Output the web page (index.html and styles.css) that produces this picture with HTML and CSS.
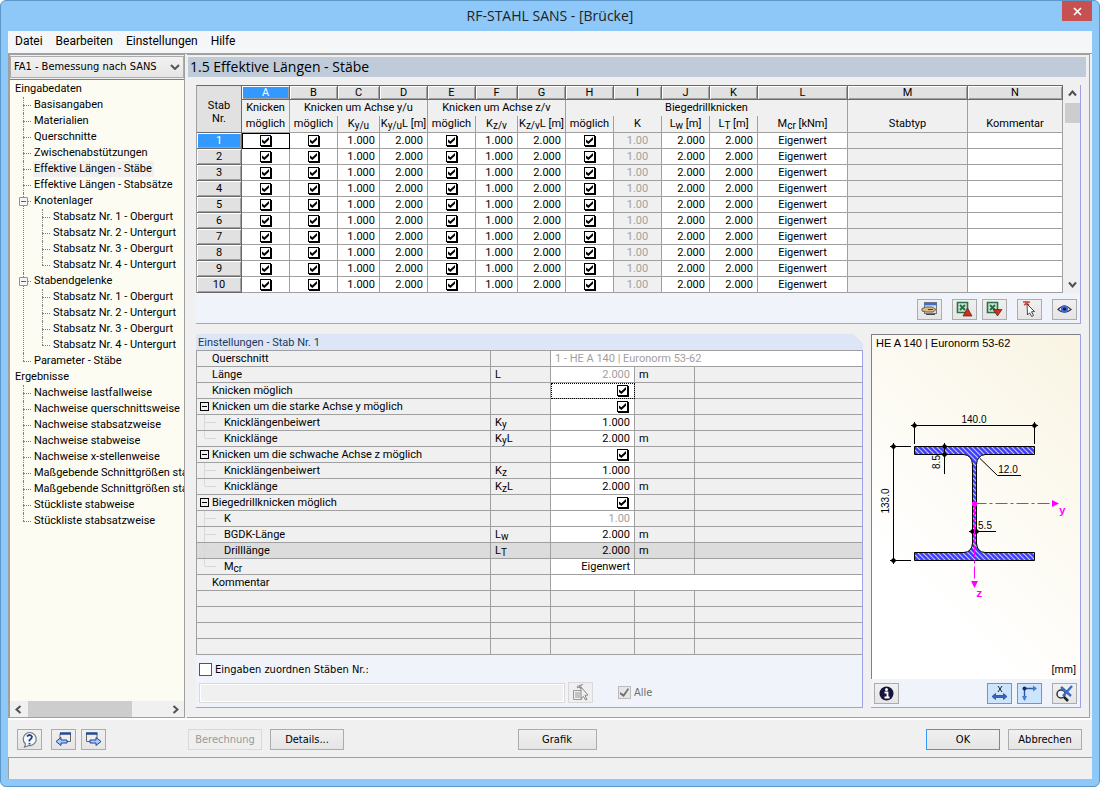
FILE: index.html
```html
<!DOCTYPE html>
<html lang="de">
<head>
<meta charset="utf-8">
<title>RF-STAHL SANS - [Brücke]</title>
<link rel="stylesheet" href="styles.css">
</head>
<body>
<div class="window">
  <header class="titlebar">
    <h1>RF-STAHL SANS - [Brücke]</h1>
    <button class="close" aria-label="Schließen"><svg width="9" height="9" viewBox="0 0 9 9"><path d="M1 1l7 7M8 1L1 8" stroke="#fff" stroke-width="1.7"/></svg></button>
  </header>
  <div class="client">
    <nav class="menubar">
      <a href="#">Datei</a><a href="#">Bearbeiten</a><a href="#">Einstellungen</a><a href="#">Hilfe</a>
    </nav>
    <div class="workspace">
      <aside class="sidebar">
        <div class="case"><select aria-label="Bemessungsfall"><option>FA1 - Bemessung nach SANS</option></select>
          <svg width="10" height="6" viewBox="0 0 10 6"><path d="M1 1l4 4 4-4" fill="none" stroke="#555" stroke-width="2"/></svg></div>
        <div class="tree">
          <ul class="root">
            <li><a href="#">Eingabedaten</a>
              <ul>
                <li><a href="#">Basisangaben</a></li>
                <li><a href="#">Materialien</a></li>
                <li><a href="#">Querschnitte</a></li>
                <li><a href="#">Zwischenabstützungen</a></li>
                <li><a href="#" class="current">Effektive Längen - Stäbe</a></li>
                <li><a href="#">Effektive Längen - Stabsätze</a></li>
                <li><button class="toggle" aria-label="Knotenlager einklappen"></button><a href="#">Knotenlager</a>
                  <ul>
                    <li><a href="#">Stabsatz Nr. 1 - Obergurt</a></li>
                    <li><a href="#">Stabsatz Nr. 2 - Untergurt</a></li>
                    <li><a href="#">Stabsatz Nr. 3 - Obergurt</a></li>
                    <li><a href="#">Stabsatz Nr. 4 - Untergurt</a></li>
                  </ul></li>
                <li><button class="toggle" aria-label="Stabendgelenke einklappen"></button><a href="#">Stabendgelenke</a>
                  <ul>
                    <li><a href="#">Stabsatz Nr. 1 - Obergurt</a></li>
                    <li><a href="#">Stabsatz Nr. 2 - Untergurt</a></li>
                    <li><a href="#">Stabsatz Nr. 3 - Obergurt</a></li>
                    <li><a href="#">Stabsatz Nr. 4 - Untergurt</a></li>
                  </ul></li>
                <li><a href="#">Parameter - Stäbe</a></li>
              </ul></li>
            <li><a href="#">Ergebnisse</a>
              <ul>
                <li><a href="#">Nachweise lastfallweise</a></li>
                <li><a href="#">Nachweise querschnittsweise</a></li>
                <li><a href="#">Nachweise stabsatzweise</a></li>
                <li><a href="#">Nachweise stabweise</a></li>
                <li><a href="#">Nachweise x-stellenweise</a></li>
                <li><a href="#">Maßgebende Schnittgrößen sta</a></li>
                <li><a href="#">Maßgebende Schnittgrößen sta</a></li>
                <li><a href="#">Stückliste stabweise</a></li>
                <li><a href="#">Stückliste stabsatzweise</a></li>
              </ul></li>
          </ul>
          <div class="hscroll">
            <svg width="7" height="9" viewBox="0 0 7 9"><path d="M5.500 1l-4 3.500 4 3.500" fill="none" stroke="#505050" stroke-width="2"/></svg>
            <div class="track"><div class="thumb"></div></div>
            <svg width="7" height="9" viewBox="0 0 7 9"><path d="M1.500 1l4 3.500-4 3.500" fill="none" stroke="#505050" stroke-width="2"/></svg>
          </div>
        </div>
      </aside>
      <main class="content">
        <h2>1.5 Effektive Längen - Stäbe</h2>
        <section class="members">
          <div class="gridwrap">
            <table class="grid">
              <colgroup><col class="w45"><col class="w48"><col class="w48"><col class="w42"><col class="w48"><col class="w48"><col class="w42"><col class="w48"><col class="w48"><col class="w48"><col class="w48"><col class="w48"><col class="w90"><col class="w120"><col></colgroup>
              <thead>
                <tr class="letters"><th rowspan="3" class="corner">Stab<br>Nr.</th><th class="active">A</th><th>B</th><th>C</th><th>D</th><th>E</th><th>F</th><th>G</th><th>H</th><th>I</th><th>J</th><th>K</th><th>L</th><th>M</th><th>N</th></tr>
                <tr class="groups"><th>Knicken</th><th colspan="3">Knicken um Achse y/u</th><th colspan="3">Knicken um Achse z/v</th><th colspan="5">Biegedrillknicken</th><th></th><th></th></tr>
                <tr class="names"><th>möglich</th><th>möglich</th><th>K<sub>y/u</sub></th><th>K<sub>y/u</sub>L [m]</th><th>möglich</th><th>K<sub>z/v</sub></th><th>K<sub>z/v</sub>L [m]</th><th>möglich</th><th>K</th><th>L<sub>w</sub> [m]</th><th>L<sub>T</sub> [m]</th><th>M<sub>cr</sub> [kNm]</th><th>Stabtyp</th><th>Kommentar</th></tr>
              </thead>
              <tbody id="members"></tbody>
            </table>
            <div class="vscroll">
              <svg width="9" height="7" viewBox="0 0 9 7"><path d="M1 5.500l3.500-4 3.500 4" fill="none" stroke="#505050" stroke-width="2"/></svg>
              <div class="track"><div class="thumb"></div></div>
              <svg width="9" height="7" viewBox="0 0 9 7"><path d="M1 1.500l3.500 4 3.500-4" fill="none" stroke="#505050" stroke-width="2"/></svg>
            </div>
          </div>
          <div class="tools">
            <button class="icon" aria-label="Stabsatz wählen"><svg width="17" height="16" viewBox="0 0 17 16"><rect x="3.500" y="1.500" width="12" height="11" fill="#dcdcdc" stroke="#777"/><path d="M3 3h13" stroke="#3a6ed0" stroke-width="2.500"/><path d="M1 7.500l4-1.500h6l4 2.500-3 2.500H5L1 10z" fill="#d9b98a" stroke="#5c4a32" stroke-width=".8"/><path d="M5 13.500h9M7 8.500h5" stroke="#444"/></svg></button>
            <button class="icon gap-l" aria-label="Excel-Export"><svg width="17" height="16" viewBox="0 0 17 16"><path d="M1.500 1.500h10v10h-10z" fill="#d2e4d6" stroke="#2c6e48" stroke-width="1.600"/><path d="M4 4l5 5M9 4L4 9" stroke="#247345" stroke-width="2"/><path d="M11.500 7l4.500 8H7z" fill="#c8321e" stroke="#70180c" stroke-width=".7"/></svg></button>
            <button class="icon gap-s" aria-label="Excel-Import"><svg width="17" height="16" viewBox="0 0 17 16"><path d="M1.500 1.500h10v10h-10z" fill="#d2e4d6" stroke="#2c6e48" stroke-width="1.600"/><path d="M4 4l5 5M9 4L4 9" stroke="#247345" stroke-width="2"/><path d="M7 8.500h9L11.500 15z" fill="#c8321e" stroke="#70180c" stroke-width=".7"/></svg></button>
            <button class="icon gap-l" aria-label="Stab wählen"><svg width="17" height="16" viewBox="0 0 17 16"><path d="M2 1h7M3 4l5-3M4 0l4 4" stroke="#c8463c" stroke-width="1.500"/><path d="M6 3l7.500 7.500-3 .3 2 3.700-1.800 1-2-3.700L6.500 14z" fill="#fff" stroke="#333" stroke-width=".9"/></svg></button>
            <button class="icon gap-l" aria-label="Ansicht"><svg width="17" height="16" viewBox="0 0 17 16"><path d="M2 8.500Q8.500 1.500 15 8.500 8.500 14 2 8.500z" fill="#f4f7ff" stroke="#334" stroke-width="1.200"/><circle cx="8.500" cy="8" r="3.700" fill="#3e66cf"/><circle cx="8.500" cy="8" r="1.600" fill="#101840"/></svg></button>
          </div>
        </section>
        <div class="lower">
          <section class="settings">
            <h3>Einstellungen - Stab Nr. 1</h3>
            <table class="props">
              <colgroup><col class="w294"><col class="w60"><col class="w84"><col class="w60"><col></colgroup>
              <tbody>
                <tr><th>Querschnitt</th><td></td><td colspan="3" class="val text off">1 - HE A 140 | Euronorm 53-62</td></tr>
                <tr><th>Länge</th><td>L</td><td class="val off">2.000</td><td>m</td><td></td></tr>
                <tr><th>Knicken möglich</th><td></td><td class="val focus"><input type="checkbox" class="tick" checked aria-label="Knicken möglich"></td><td></td><td></td></tr>
                <tr><th><button class="fold" aria-label="Einklappen"></button>Knicken um die starke Achse y möglich</th><td></td><td class="val"><input type="checkbox" class="tick" checked aria-label="Knicken um die starke Achse y möglich"></td><td></td><td></td></tr>
                <tr class="child"><th>Knicklängenbeiwert</th><td>K<sub>y</sub></td><td class="val">1.000</td><td></td><td></td></tr>
                <tr class="child end"><th>Knicklänge</th><td>K<sub>y</sub>L</td><td class="val">2.000</td><td>m</td><td></td></tr>
                <tr><th><button class="fold" aria-label="Einklappen"></button>Knicken um die schwache Achse z möglich</th><td></td><td class="val"><input type="checkbox" class="tick" checked aria-label="Knicken um die schwache Achse z möglich"></td><td></td><td></td></tr>
                <tr class="child"><th>Knicklängenbeiwert</th><td>K<sub>z</sub></td><td class="val">1.000</td><td></td><td></td></tr>
                <tr class="child end"><th>Knicklänge</th><td>K<sub>z</sub>L</td><td class="val">2.000</td><td>m</td><td></td></tr>
                <tr><th><button class="fold" aria-label="Einklappen"></button>Biegedrillknicken möglich</th><td></td><td class="val"><input type="checkbox" class="tick" checked aria-label="Biegedrillknicken möglich"></td><td></td><td></td></tr>
                <tr class="child"><th>K</th><td></td><td class="val off">1.00</td><td></td><td></td></tr>
                <tr class="child"><th>BGDK-Länge</th><td>L<sub>w</sub></td><td class="val">2.000</td><td>m</td><td></td></tr>
                <tr class="child selected"><th>Drilllänge</th><td>L<sub>T</sub></td><td class="val">2.000</td><td>m</td><td></td></tr>
                <tr class="child end"><th>M<sub>cr</sub></th><td></td><td class="val">Eigenwert</td><td></td><td></td></tr>
                <tr><th>Kommentar</th><td></td><td colspan="3" class="val text"></td></tr>
                <tr><th></th><td></td><td></td><td></td><td></td></tr>
                <tr><th></th><td></td><td></td><td></td><td></td></tr>
                <tr><th></th><td></td><td></td><td></td><td></td></tr>
                <tr><th></th><td></td><td></td><td></td><td></td></tr>
              </tbody>
            </table>
            <div class="assign">
              <label class="line"><input type="checkbox" class="box"> Eingaben zuordnen Stäben Nr.:</label>
              <div class="line">
                <input type="text" class="field" disabled aria-label="Stäbe Nr.">
                <button class="icon off" disabled aria-label="Stäbe wählen"><svg width="17" height="17" viewBox="0 0 17 17"><path d="M1.500 6.500h8v9h-8zM3 9h5M3 11h5M3 13h5" fill="#eee" stroke="#999"/><path d="M5 2l5 3M11 0L5 4M7 1l3 4" stroke="#999" stroke-width="1.300"/><path d="M9 3l7 8-3 .5 2 4-1.500.5-2-3.500-2.500 2z" fill="#eee" stroke="#888"/></svg></button>
                <label class="all"><input type="checkbox" class="box" checked disabled> Alle</label>
              </div>
            </div>
          </section>
          <section class="section-view">
            <div class="canvas">
              <p>HE A 140 | Euronorm 53-62</p>
              <svg class="drawing" width="208" height="306" viewBox="872 352 208 306">
                <defs><pattern id="hatch" width="5" height="5" patternUnits="userSpaceOnUse"><rect width="5" height="5" fill="#3c3cff"/><path d="M-1-1l7 7M-1 4l2 2M4-1l2 2" stroke="#c4c4f4" stroke-width="1.200"/></pattern></defs>
                <path d="M914.500 446.500h120v8H985q-8 1-8.500 10V543q.5 9 8.500 9.500h49.500v8h-120v-8H964q8-.5 8.500-9.500V464.500q-.5-9-8.500-10h-49.500z" fill="url(#hatch)" stroke="#000"/>
                <g fill="none" stroke="#000"><path d="M911 425.500h127M914.500 422v22M1034.500 422v22M893.500 443v121M890 446.500h21M890 560.500h21M944.500 443v31M941 446.500h7M941 454.500h7M979.500 458l18 17.500H1021M969 531.500h27"/></g>
                <path d="M911.500 425.500l3-3 3 3-3 3zM1031.500 425.500l3-3 3 3-3 3zM890.500 446.500l3-3 3 3-3 3zM890.500 560.500l3-3 3 3-3 3zM941.500 446.500l3-3 3 3-3 3zM941.500 454.500l3-3 3 3-3 3zM969.500 531.500l3-3 3 3-3 3zM973.500 531.500l3-3 3 3-3 3z"/>
                <path d="M974.500 503.500H1053M974.500 503.500V581" fill="none" stroke="#f0f" stroke-dasharray="12 3 3 3"/>
                <path d="M1052 500v7l7-3.500zM971 581h7l-3.500 7zM972 502h5v4h-5z" fill="#f0f"/>
                <g class="dims"><text x="974" y="423" text-anchor="middle">140.0</text><text x="1008" y="473" text-anchor="middle">12.0</text><text x="985" y="529" text-anchor="middle">5.5</text><text transform="translate(889 501) rotate(-90)" text-anchor="middle">133.0</text><text transform="translate(940 462) rotate(-90)" text-anchor="middle">8.5</text></g>
                <g class="axes"><text x="1059" y="514">y</text><text x="976" y="597">z</text></g>
              </svg>
              <p class="unit">[mm]</p>
            </div>
            <div class="view-tools">
              <button class="icon" aria-label="Info"><svg width="17" height="17" viewBox="0 0 17 17"><circle cx="8.500" cy="8.500" r="7" fill="#15153a"/><circle cx="8.500" cy="4.500" r="1.500" fill="#fff"/><path d="M6.500 7.500h3v5M6.500 12.500h5" stroke="#fff" stroke-width="1.800" fill="none"/></svg></button>
              <button class="icon on push" aria-label="Bemaßung"><svg width="17" height="17" viewBox="0 0 17 17"><path d="M7 1l4 6M11 1L7 7" stroke="#222"/><path d="M1 11.500l3.500-3v2h8v-2l3.500 3-3.500 3v-2h-8v2z" fill="#3768c0" stroke="#1d3c80" stroke-width=".7"/></svg></button>
              <button class="icon on gap-s" aria-label="Achsen"><svg width="17" height="17" viewBox="0 0 17 17"><path d="M3.500 15V3.500H15" fill="none" stroke="#2c55a0" stroke-width="1.400"/><path d="M12 0.500l4 3-4 3zM1 11h5l-2.500 5z" fill="#4a7ad0"/><circle cx="3.500" cy="3.500" r="2" fill="#1b2a60"/></svg></button>
              <button class="icon gap-l" aria-label="Zoom zurücksetzen"><svg width="19" height="17" viewBox="0 0 19 17"><circle cx="6" cy="9" r="4" fill="#eef4ff" stroke="#333" stroke-width="1.500"/><path d="M9 12l4 4" stroke="#222" stroke-width="2.500"/><path d="M6 2l10 9M17 1L8 11" stroke="#3c6cc4" stroke-width="2.500"/></svg></button>
            </div>
          </section>
        </div>
      </main>
    </div>
    <footer class="actions">
      <div class="left-actions">
        <button class="icon" aria-label="Hilfe"><svg width="17" height="17" viewBox="0 0 17 17"><path d="M4.500 13A6.500 6.500 0 1 1 8 14.500L3.500 16z" fill="#f4f8ff" stroke="#777" stroke-width="1.200"/><path d="M6 5.500q2.500-3 5 0 0 2-2.500 3.500v1.500M8.500 12v1.500" fill="none" stroke="#274080" stroke-width="1.800"/></svg></button>
        <button class="icon help-gap" aria-label="Zurück"><svg width="17" height="17" viewBox="0 0 17 17"><path d="M5 2.500h10.500v8H5z" fill="#eee" stroke="#666"/><path d="M5 2.500h11" stroke="#234a98" stroke-width="2.500"/><path d="M1 10.500l5-4v2.500h6v3H6v2.500z" fill="#a8cbff" stroke="#20429a"/></svg></button>
        <button class="icon gap-s" aria-label="Weiter"><svg width="17" height="17" viewBox="0 0 17 17"><path d="M1.500 2.500H12v8H1.500z" fill="#eee" stroke="#666"/><path d="M1 2.500h11.500" stroke="#234a98" stroke-width="2.500"/><path d="M16 10.500l-5-4v2.500H5v3h6v2.500z" fill="#a8cbff" stroke="#20429a"/></svg></button>
        <button class="btn calc" disabled>Berechnung</button><button class="btn next">Details...</button>
      </div>
      <button class="btn wide">Grafik</button>
      <div class="right-actions"><button class="btn primary">OK</button><button class="btn next">Abbrechen</button></div>
    </footer>
    <div class="status"></div>
  </div>
</div>
<script src="grid.js"></script>
</body>
</html>
```
FILE: grid.js
```
// Fills the member grid with one row per member.
const body = document.getElementById('members');
const tick = (nr, col) =>
  `<td class="c"><input type="checkbox" class="tick" checked aria-label="Stab ${nr}, Spalte ${col}"></td>`;
for (let nr = 1; nr <= 10; nr++) {
  const row = document.createElement('tr');
  row.innerHTML = `<th>${nr}</th>` + tick(nr, 'A') + tick(nr, 'B') +
    '<td>1.000</td><td>2.000</td>' + tick(nr, 'E') +
    '<td>1.000</td><td>2.000</td>' + tick(nr, 'H') +
    '<td class="off c">1.00</td><td>2.000</td><td>2.000</td>' +
    '<td class="c">Eigenwert</td><td class="off"></td><td></td>';
  body.append(row);
}
body.rows[0].classList.add('active');
```
FILE: styles.css
```css
* { box-sizing: border-box; }
body { margin: 0; background: #fff; color: #000; font: 11px/16px "DejaVu Sans Condensed", "Noto Sans", sans-serif; }
h1, h2, h3, p, ul { margin: 0; padding: 0; font-weight: normal; }
a { color: inherit; text-decoration: none; }
button, input, select { font: inherit; color: inherit; margin: 0; padding: 0; }
svg { display: block; flex: none; }

.window { min-height: 100vh; display: flex; flex-direction: column; padding: 0 7px 7px; background: #8dc8f9; border: 1px solid #5b97c9; border-radius: 6px; }
.titlebar { height: 30px; display: grid; grid-template-columns: 1fr auto 1fr; align-items: center; }
.titlebar h1 { grid-column: 2; font: 14px/20px "Open Sans", sans-serif; color: #222; }
.close { justify-self: end; align-self: start; width: 30px; height: 20px; display: grid; place-items: center; background: #c75050; border: 0; }
.client { flex: 1; display: flex; flex-direction: column; background: #f0f0f0; }
.menubar { height: 22px; display: flex; gap: 13px; padding: 2px 7px 0; background: #f5f6f7; font: 12px/16px Roboto, sans-serif; }

.workspace { flex: 1; display: flex; gap: 2px; padding-right: 2px; border-top: 1px solid #a0a0a0; }
.sidebar { width: 177px; display: flex; flex-direction: column; border: solid #a0a0a0; border-width: 1px 1px 1px 2px; flex: none; }
.case { position: relative; display: flex; padding: 1px 0; }
.case select { appearance: none; flex: 1; min-width: 0; height: 22px; padding: 0 20px 0 3px; border: 1px solid #acacac; border-radius: 0; background: linear-gradient(#f2f2f2, #e5e5e5); }
.case svg { position: absolute; right: 4px; top: 9px; }
.tree { flex: 1; display: flex; flex-direction: column; justify-content: space-between; border-top: 1px solid #808080; background: #fcfcf3; overflow: hidden; font-family: Roboto, sans-serif; }
.tree ul { list-style: none; }
.tree a { display: inline-block; height: 16px; padding: 0 2px 0 1px; white-space: nowrap; vertical-align: top; }
.tree .current { background: #f0f0f0; }
.root { padding: 1px 0 0 4px; }
.root ul li { position: relative; padding-left: 19px; }
.root ul li::before { content: ""; position: absolute; left: 9px; top: 0; bottom: 0; border-left: 1px dotted #808080; }
.root ul li:last-child::before { bottom: auto; height: 8px; }
.root ul li::after { content: ""; position: absolute; left: 9px; top: 8px; width: 8px; border-top: 1px dotted #808080; }
.toggle { position: absolute; z-index: 1; left: 5px; top: 4px; width: 9px; height: 9px; border: 1px solid #919191; border-radius: 1px; background: linear-gradient(#3c5fa8, #3c5fa8) center / 5px 1px no-repeat, #f6f6f6; }
.hscroll { height: 16px; display: flex; align-items: center; gap: 6px; padding: 0 5px; background: #f0f0f0; }
.track { flex: 1; }
.hscroll .thumb { width: 75%; height: 16px; background: #cdcdcd; }

.content { flex: 1; min-width: 0; display: flex; flex-direction: column; padding: 2px 3px 9px 0; border: solid #a0a0a0; border-width: 1px 1px 1px 0; }
.content h2 { height: 20px; margin-left: 1px; padding-left: 2px; background: #bfcbd9; font: 14px/20px "Open Sans", sans-serif; }
.members, .lower { margin: 0 5px 0 9px; }
.members { margin-top: 8px; border-right: 1px solid #a0a0e8; border-bottom: 1px solid #a0a0e8; }
.gridwrap { display: flex; gap: 1px; }
table { table-layout: fixed; border-collapse: separate; border-spacing: 0; width: 100%; font: 11px/15px Roboto, sans-serif; }
th, td { padding: 0; height: 16px; font-weight: normal; white-space: nowrap; overflow: hidden; border: solid #a0a0a0; border-width: 0 1px 1px 0; }
sub { font-size: 10px; line-height: 0; vertical-align: -2px; }
.w42 { width: 42px; } .w45 { width: 45px; } .w48 { width: 48px; } .w60 { width: 60px; } .w84 { width: 84px; }
.w90 { width: 90px; } .w120 { width: 120px; } .w294 { width: 294px; }
.grid { flex: 1; min-width: 0; border-top: 1px solid #696969; border-left: 1px solid #a0a0a0; }
.grid th { text-align: center; }
.letters th { height: 14px; line-height: 12px; background: #e1e1e1; border-color: #696969; box-shadow: inset 1px 1px #fff, inset -1px -1px #a0a0a0; }
.grid .letters .active { background: #3399ff; color: #fff; }
.grid .corner { background: #e1e1e1; line-height: 13px; padding-top: 6px; box-shadow: none; border-bottom-color: #696969; }
.groups th { border-bottom: 0; line-height: 14px; }
.names th { height: 17px; line-height: 16px; }
.grid tbody th { background: #e1e1e1; border-color: #696969; line-height: 14px; box-shadow: inset 1px 1px #fff, inset -1px -1px #a0a0a0; }
.grid tbody td { background: #fff; text-align: right; padding-right: 4px; }
.grid tbody .c { text-align: center; padding: 0; }
.grid tbody .off { background: #f0f0f0; color: #a0a0a0; }
.grid tbody .active th { background: #3399ff; color: #fff; }
.grid .active td:nth-child(2) { outline: 1px solid #000; outline-offset: -1px; }
.tick { appearance: none; position: relative; width: 11px; height: 11px; vertical-align: -2px; background: #fff; border: 1px solid #000; box-shadow: 1px 1px #000; }
.tick:checked::before { content: ""; position: absolute; inset: 1px; background: #000; clip-path: polygon(0 35%, 35% 62%, 100% 0, 100% 38%, 35% 100%, 0 75%); }
.vscroll { width: 16px; display: flex; flex-direction: column; align-items: center; gap: 6px; padding: 5px 0; }
.vscroll .thumb { width: 15px; height: 20px; background: #cdcdcd; }
.vscroll .track { display: flex; }
.tools { height: 30px; display: flex; align-items: center; justify-content: flex-end; padding-right: 3px; padding-top: 2px; background: #f0f4fa; }
.icon { width: 25px; height: 21px; display: grid; place-items: center; flex: none; background: linear-gradient(#f0f0f0, #e5e5e5); border: 1px solid #acacac; }
.icon.on { background: #cce4fc; border-color: #569de5; }
.icon.off { border-color: #d9d9d9; background: #efefef; }
.gap-l { margin-left: 10px; }
.gap-s { margin-left: 5px; }

.lower { flex: 1; display: flex; gap: 8px; margin-top: 10px; }
.settings { flex: 1; min-width: 0; display: flex; flex-direction: column; border-right: 1px solid #a0a0e8; border-bottom: 1px solid #a0a0e8; background: #f0f4fa; }
.settings h3 { height: 16px; margin-right: -1px; padding-left: 2px; background: linear-gradient(225deg, #f0f0f0 7px, #dce6f7 7px); color: #1e395b; font: 11px/17px Roboto, sans-serif; }
.props { border-top: 1px solid #a0a0a0; border-left: 1px solid #a0a0a0; background: #f0f0f0; }
.props th { position: relative; text-align: left; padding-left: 15px; }
.props td { padding-left: 4px; }
.props td:last-child { border-right: 0; }
.props .child th { padding-left: 27px; }
.child th::before { content: ""; position: absolute; left: 7px; top: 0; bottom: 0; border-left: 1px solid #d8d8d8; }
.child.end th::before { bottom: 8px; }
.child th::after { content: ""; position: absolute; left: 8px; top: 7px; width: 11px; border-top: 1px solid #d8d8d8; }
.props .val { background: #fff; text-align: right; padding-right: 4px; }
.props .val .tick { margin-right: 2px; }
.props .text { text-align: left; }
.props .off { color: #a0a0a0; }
.props .selected, .props .selected .val { background: #dcdcdc; }
.props .focus { outline: 1px dotted #000; outline-offset: -1px; }
.fold { position: absolute; left: 3px; top: 3px; width: 9px; height: 9px; border: 1px solid #000; background: linear-gradient(#000, #000) center / 5px 1px no-repeat; }
.assign { display: flex; flex-direction: column; gap: 2px; padding: 4px 3px 3px; }
.line { display: flex; align-items: center; gap: 3px; min-height: 21px; }
.box { appearance: none; width: 13px; height: 13px; display: grid; place-items: center; background: #fff; border: 1px solid #555; }
.box:disabled { background: #e6e6e6; border-color: #bcbcbc; }
.box:checked::before { content: ""; width: 9px; height: 9px; background: #707070; clip-path: polygon(0 45%, 38% 70%, 88% 0, 100% 15%, 42% 100%, 0 70%); }
.field { flex: 1; max-width: 366px; height: 20px; border: 1px solid #d9d9d9; background: #f0f0f0; box-shadow: inset 0 0 0 1px #fff; }
.all { display: flex; align-items: center; gap: 3px; margin-left: 22px; color: #6d6d6d; }

.section-view { width: 210px; display: flex; flex-direction: column; border-right: 1px solid #a0a0e8; border-bottom: 1px solid #a0a0e8; background: #f0f4fa; }
.canvas { flex: 1; display: flex; flex-direction: column; justify-content: space-between; border: solid #808080; border-width: 1px 0 0 1px; background: linear-gradient(225deg, #f9f4e2, #fff 75%); font: 11px/16px "Liberation Sans", sans-serif; }
.canvas p { padding: 0 4px; }
.canvas .unit { text-align: right; line-height: 20px; }
.drawing { width: 100%; }
.dims { font: 10px "Liberation Sans", sans-serif; }
.axes { font: bold 11px "Liberation Mono", monospace; fill: #f0f; }
.view-tools { height: 28px; display: flex; align-items: center; padding: 0 3px; }
.push { margin-left: auto; }

.actions { display: flex; align-items: center; height: 39px; padding: 2px 10px 0 9px; border-top: 2px solid #fff; }
.help-gap { margin-left: 9px; }
.btn { width: 74px; height: 21px; border: 1px solid #acacac; background: linear-gradient(#f0f0f0, #e5e5e5); }
.btn:disabled { color: #9a9a9a; border-color: #d9d9d9; background: #efefef; }
.btn.wide { width: 79px; margin-left: 15px; }
.btn.primary { border-color: #3399ff; }
.btn.calc { margin-left: 82px; }
.btn.next { margin-left: 8px; }
.left-actions, .right-actions { flex: 1 1 0; display: flex; }
.right-actions { justify-content: flex-end; }
.status { height: 22px; border: 1px solid #a0a0a0; border-width: 1px 0 0 1px; }
```
